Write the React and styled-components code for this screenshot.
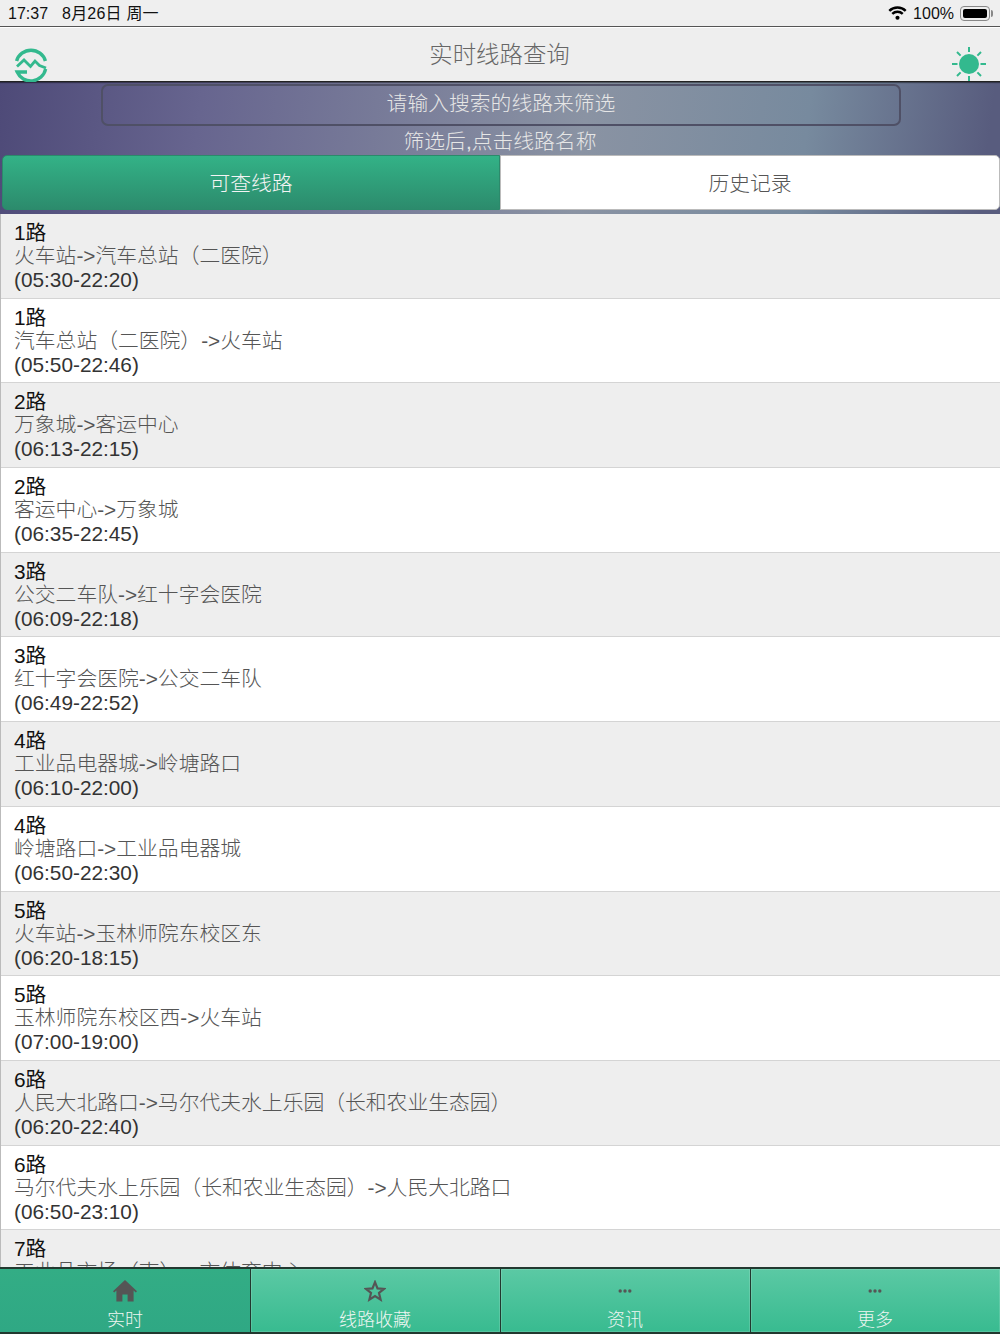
import React from "react";
import styled, { createGlobalStyle } from "styled-components";

const GlobalStyle = createGlobalStyle`
  html, body {
    margin: 0;
    padding: 0;
    background: #fff;
  }
  body {
    font-family: "Liberation Sans", "Noto Sans CJK SC", sans-serif;
  }
`;

const Page = styled.div`
  width: 1000px;
  height: 1334px;
  display: flex;
  flex-direction: column;
  overflow: hidden;
`;

const StatusBar = styled.div`
  height: 26px;
  flex: none;
  box-sizing: content-box;
  display: flex;
  align-items: center;
  justify-content: space-between;
  padding: 0 7px 0 8px;
  background: #efefef;
  border-bottom: 1px solid #555;
  color: #111;
  font-size: 16px;
  line-height: 18px;
`;

const StatusLeft = styled.div`
  display: flex;
  align-items: center;
  gap: 14px;
  padding-top: 2px;
`;

const StatusDate = styled.span`
  letter-spacing: 0.2px;
`;

const StatusRight = styled.div`
  display: flex;
  align-items: center;
  gap: 6px;
`;

const StatusPercent = styled.span`
  padding-top: 2px;
`;

const Battery = styled.div`
  position: relative;
  width: 30px;
  height: 15px;
  box-sizing: border-box;
  border: 1px solid #888;
  border-radius: 4px;
  padding: 2px;
  margin-right: 3px;

  &::before {
    content: "";
    display: block;
    height: 100%;
    background: #000;
    border-radius: 2px;
  }

  &::after {
    content: "";
    position: absolute;
    right: -4px;
    top: 3px;
    width: 2px;
    height: 7px;
    background: #888;
    border-radius: 0 2px 2px 0;
  }
`;

const Header = styled.div`
  height: 53px;
  flex: none;
  margin-top: 1px;
  display: flex;
  align-items: flex-end;
  justify-content: space-between;
  padding: 0 13px 0 14px;
  background: #eeeeee;
  border-bottom: 1px solid #222;
  box-shadow: 0 1px 1px rgba(0, 0, 0, 0.4);
  position: relative;
  z-index: 1;
`;

const HeaderTitle = styled.div`
  flex: 1;
  align-self: flex-start;
  margin-top: 12px;
  text-align: center;
  color: #666;
  font-size: 23.4px;
  font-weight: 300;
  line-height: 30px;
`;

const FilterPanel = styled.div`
  flex: none;
  height: 132px;
  box-sizing: border-box;
  padding-top: 2px;
  display: flex;
  flex-direction: column;
  align-items: center;
  background: linear-gradient(97deg, #4e4a78 0%, #67658f 20%, #8a93a3 58%, #778a9e 80%, #585c7e 98%);
`;

const SearchBox = styled.div`
  width: 800px;
  height: 42px;
  margin-left: 2px;
  padding-bottom: 6px;
  box-sizing: border-box;
  border: 2px solid #4f5066;
  border-radius: 7px;
  display: flex;
  align-items: center;
  justify-content: center;
  color: #e6e6e6;
  font-size: 20.8px;
  font-weight: 300;
`;

const Hint = styled.div`
  height: 29px;
  line-height: 31px;
  color: #e6e6e6;
  font-size: 20.8px;
  font-weight: 300;
`;

const Tabs = styled.div`
  width: 998px;
  height: 55px;
  align-self: flex-end;
  display: grid;
  grid-template-columns: 498px 1fr;
`;

const Tab = styled.div`
  display: flex;
  align-items: center;
  justify-content: center;
  padding-bottom: 2px;
  font-size: 20.8px;
  font-weight: 300;
  box-sizing: border-box;
  color: ${(p) => (p.$active ? "#f4f4f4" : "#555")};
  background: ${(p) => (p.$active ? "linear-gradient(#33b287, #2c8b6c)" : "#fff")};
  border: 1px solid ${(p) => (p.$active ? "#2b8a6b" : "#bbb")};
  border-radius: ${(p) => (p.$active ? "5px 0 0 5px" : "0 5px 5px 0")};
`;

const RouteList = styled.div`
  flex: 1;
  min-height: 0;
  overflow: hidden;
  border-left: 1px solid #bbb;
`;

const RouteRow = styled.div`
  height: 84.7px;
  box-sizing: border-box;
  padding: 8px 13px 0;
  background: ${(p) => (p.$odd ? "#eeeeee" : "#ffffff")};
  border-bottom: 1px solid #d4d4d4;
  font-size: 20.8px;
  line-height: 24px;
`;

const RouteName = styled.div`
  color: #111;
  line-height: 22px;
`;

const RouteDirection = styled.div`
  color: #555;
  font-weight: 300;
`;

const RouteHours = styled.div`
  color: #333;
`;

const TabBar = styled.div`
  flex: none;
  height: 67px;
  box-sizing: border-box;
  display: grid;
  grid-template-columns: 250px repeat(3, 1fr);
  background: #22382f;
  padding: 2px 0;
  gap: 1px;
`;

const BarItem = styled.div`
  display: flex;
  flex-direction: column;
  align-items: center;
  padding-right: ${(p) => (p.$active ? "0" : "1px")};
  color: #eef6f2;
  font-size: 18px;
  font-weight: 300;
  background: ${(p) => (p.$active ? "linear-gradient(#33ad85, #2fa884)" : "linear-gradient(#5bc9a4, #38bb90)")};
  box-shadow: ${(p) => (p.$active ? "none" : "inset 0 0 0 1px rgba(255, 255, 255, 0.14)")};
`;

const BarIcon = styled.div`
  height: 32px;
  margin-top: 6px;
  display: flex;
  align-items: center;
  justify-content: center;
`;

const BarLabel = styled.div`
  line-height: 24px;
  margin-top: 1px;
`;

const routes = [
  ["1路", "火车站->汽车总站（二医院）", "(05:30-22:20)"],
  ["1路", "汽车总站（二医院）->火车站", "(05:50-22:46)"],
  ["2路", "万象城->客运中心", "(06:13-22:15)"],
  ["2路", "客运中心->万象城", "(06:35-22:45)"],
  ["3路", "公交二车队->红十字会医院", "(06:09-22:18)"],
  ["3路", "红十字会医院->公交二车队", "(06:49-22:52)"],
  ["4路", "工业品电器城->岭塘路口", "(06:10-22:00)"],
  ["4路", "岭塘路口->工业品电器城", "(06:50-22:30)"],
  ["5路", "火车站->玉林师院东校区东", "(06:20-18:15)"],
  ["5路", "玉林师院东校区西->火车站", "(07:00-19:00)"],
  ["6路", "人民大北路口->马尔代夫水上乐园（长和农业生态园）", "(06:20-22:40)"],
  ["6路", "马尔代夫水上乐园（长和农业生态园）->人民大北路口", "(06:50-23:10)"],
  ["7路", "工业品市场（南）->市体育中心", "(06:30-22:00)"],
];

const WifiIcon = () => (
  <svg width="19" height="14" viewBox="0 0 20 15" fill="none" stroke="#000" strokeWidth="2.6">
    <path d="M1.2 5.2a12.5 12.5 0 0 1 17.6 0" />
    <path d="M4.4 8.4a8 8 0 0 1 11.2 0" />
    <circle cx="10" cy="12.6" r="2.2" fill="#000" stroke="none" />
  </svg>
);

const LogoIcon = () => (
  <svg width="34" height="34" viewBox="0 0 34 34" fill="none" stroke="#33b98e" strokeWidth="3.4" style={{ marginBottom: -1 }}>
    <path d="M2.6 13A15 15 0 0 1 31.4 13" />
    <path d="M31.6 21A15 15 0 0 1 3.2 24H13" />
    <path d="M3 18.5L10 12L16.5 18.5L21 13L25.5 17.5L32 20" strokeWidth="2.8" />
  </svg>
);

const SunIcon = () => (
  <svg width="36" height="36" viewBox="0 0 36 36" fill="#33b98e" stroke="#33b98e" strokeWidth="2" style={{ marginBottom: -1 }}>
    <circle cx="18" cy="18" r="10" stroke="none" />
    <path d="M18 1v5M18 30v5M1 18h5.5M29.5 18H35M6 6l3.6 3.6M26.4 26.4L30 30M30 6l-3.6 3.6M9.6 26.4L6 30" />
  </svg>
);

const HomeIcon = () => (
  <svg width="24" height="22" viewBox="0 0 24 22" fill="#555">
    <path d="M12 0L0 11.2L1.2 12.4L3.4 10.4V21.5H9.4V14.5H14.6V21.5H20.6V10.4L22.8 12.4L24 11.2Z" />
  </svg>
);

const StarIcon = () => (
  <svg width="22" height="22" viewBox="0 0 22 22" fill="none" stroke="#555" strokeWidth="2.2" strokeLinejoin="miter">
    <path d="M11 2.2L13.5 8.4L20 8.9L15 13L16.6 19.6L11 16L5.4 19.6L7 13L2 8.9L8.5 8.4Z" />
  </svg>
);

const DotsIcon = () => (
  <svg width="14" height="6" viewBox="0 0 14 6" fill="#555">
    <circle cx="2.2" cy="3" r="1.7" />
    <circle cx="7" cy="3" r="1.7" />
    <circle cx="11.8" cy="3" r="1.7" />
  </svg>
);

const App = () => {
  return (
    <Page>
      <GlobalStyle />
      <StatusBar>
        <StatusLeft>
          <span>17:37</span>
          <StatusDate>8月26日 周一</StatusDate>
        </StatusLeft>
        <StatusRight>
          <WifiIcon />
          <StatusPercent>100%</StatusPercent>
          <Battery />
        </StatusRight>
      </StatusBar>
      <Header>
        <LogoIcon />
        <HeaderTitle>实时线路查询</HeaderTitle>
        <SunIcon />
      </Header>
      <FilterPanel>
        <SearchBox>请输入搜索的线路来筛选</SearchBox>
        <Hint>筛选后,点击线路名称</Hint>
        <Tabs>
          <Tab $active>可查线路</Tab>
          <Tab>历史记录</Tab>
        </Tabs>
      </FilterPanel>
      <RouteList>
        {routes.map((route, i) => (
          <RouteRow key={i} $odd={i % 2 === 0}>
            <RouteName>{route[0]}</RouteName>
            <RouteDirection>{route[1]}</RouteDirection>
            <RouteHours>{route[2]}</RouteHours>
          </RouteRow>
        ))}
      </RouteList>
      <TabBar>
        <BarItem $active>
          <BarIcon><HomeIcon /></BarIcon>
          <BarLabel>实时</BarLabel>
        </BarItem>
        <BarItem>
          <BarIcon><StarIcon /></BarIcon>
          <BarLabel>线路收藏</BarLabel>
        </BarItem>
        <BarItem>
          <BarIcon><DotsIcon /></BarIcon>
          <BarLabel>资讯</BarLabel>
        </BarItem>
        <BarItem>
          <BarIcon><DotsIcon /></BarIcon>
          <BarLabel>更多</BarLabel>
        </BarItem>
      </TabBar>
    </Page>
  );
};

export default App;
